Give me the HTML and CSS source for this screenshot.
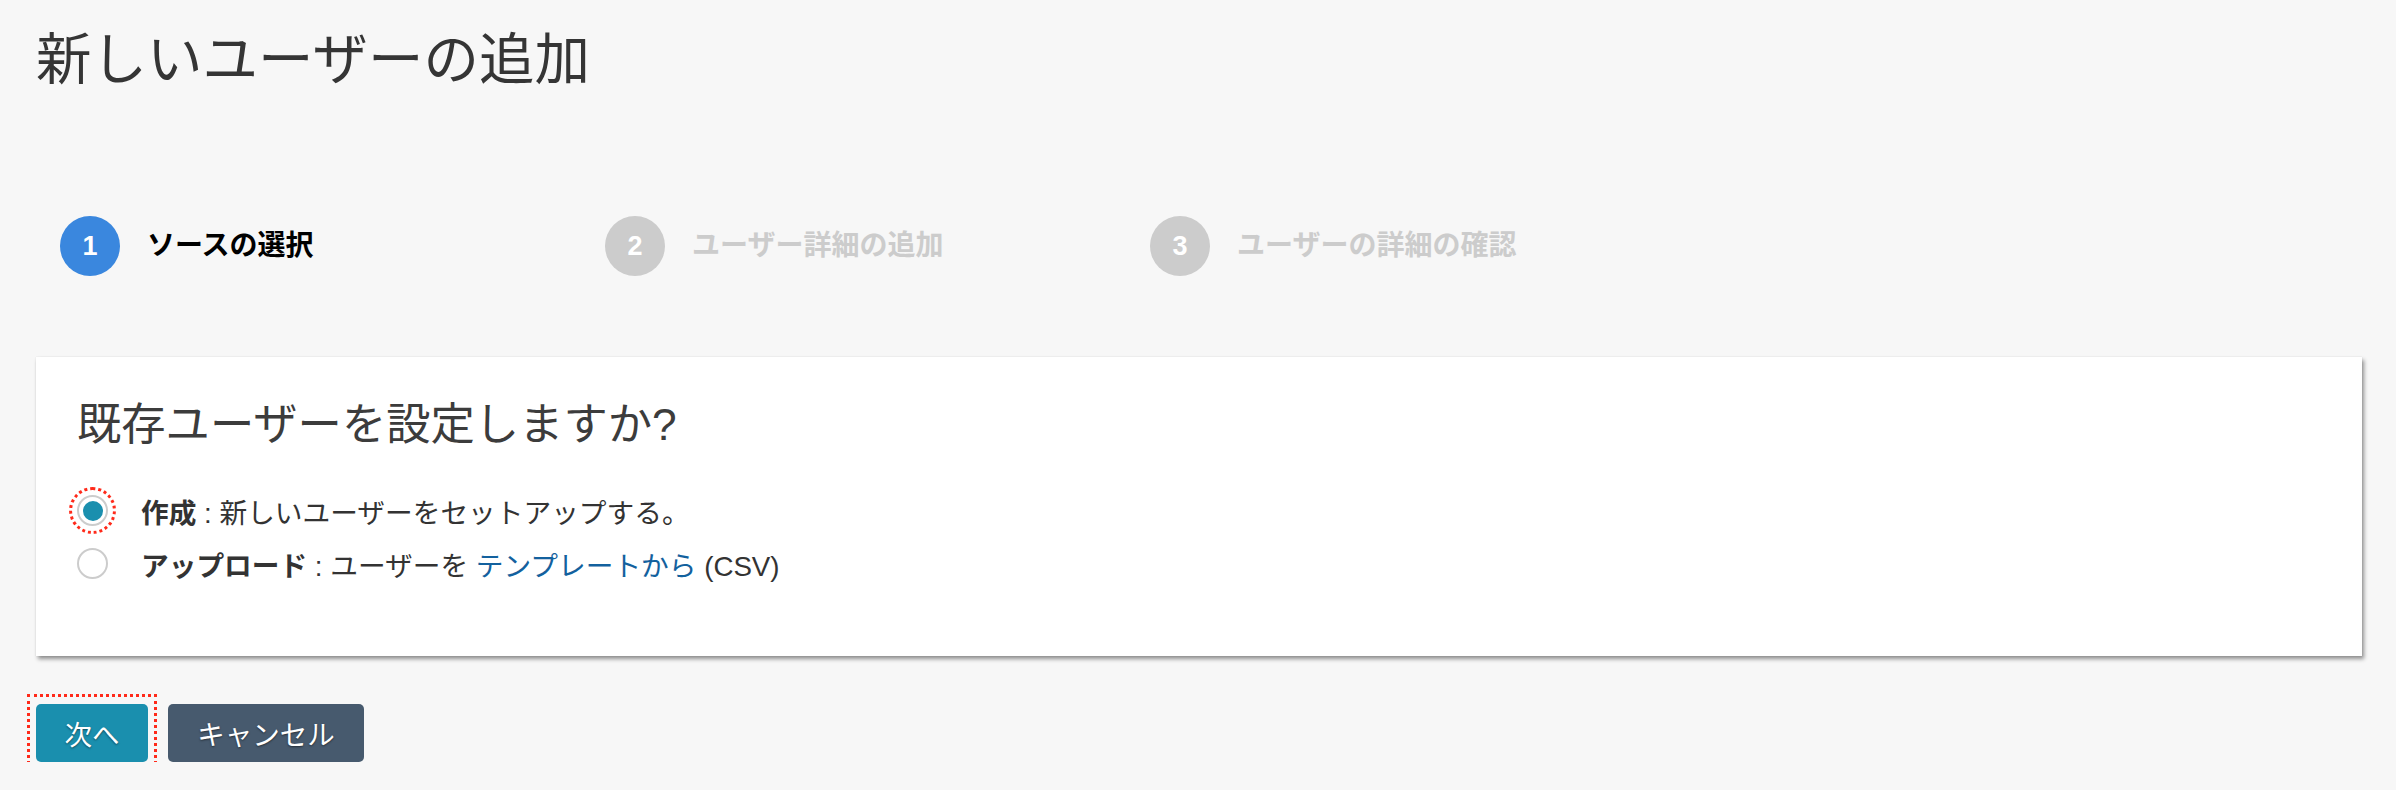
FILE: index.html
```html
<!DOCTYPE html>
<html lang="ja">
<head>
<meta charset="utf-8">
<title>新しいユーザーの追加</title>
<link rel="stylesheet" href="styles.css">
</head>
<body>
<main class="page">
  <h1 class="page-title">新しいユーザーの追加</h1>

  <ol class="steps">
    <li class="step step--active"><span class="step-num">1</span><span class="step-label">ソースの選択</span></li>
    <li class="step"><span class="step-num">2</span><span class="step-label">ユーザー詳細の追加</span></li>
    <li class="step"><span class="step-num">3</span><span class="step-label">ユーザーの詳細の確認</span></li>
  </ol>

  <section class="card">
    <h2 class="card-title">既存ユーザーを設定しますか?</h2>
    <div class="options">
      <label class="option">
        <span class="radio radio--checked radio--marked"></span>
        <span class="option-text"><b>作成</b> : 新しいユーザーをセットアップする。</span>
      </label>
      <label class="option">
        <span class="radio"></span>
        <span class="option-text"><b>アップロード</b> : ユーザーを <a class="link" href="#">テンプレートから</a> (CSV)</span>
      </label>
    </div>
  </section>

  <div class="actions">
    <button class="btn btn--primary btn--marked" type="button">次へ</button>
    <button class="btn btn--secondary" type="button">キャンセル</button>
  </div>
</main>
</body>
</html>
```

FILE: styles.css
```css
* {
  box-sizing: border-box;
}

html, body {
  margin: 0;
  padding: 0;
  background: #f7f7f7;
}

body {
  font-family: "Liberation Sans", "Noto Sans CJK JP", sans-serif;
  color: #333333;
}

.page {
  padding: 0 34px 0 36px;
}

.page-title {
  margin: 27px 0 0;
  font-size: 55.5px;
  line-height: 66px;
  font-weight: 400;
  color: #353535;
}

.steps {
  list-style: none;
  margin: 123px 0 0;
  padding: 0 0 0 24px;
  display: flex;
}

.step {
  width: 545px;
  display: flex;
  align-items: center;
  gap: 27px;
  height: 60px;
}

.step-num {
  width: 60px;
  height: 60px;
  border-radius: 50%;
  background: #cccccc;
  color: #ffffff;
  font-weight: 700;
  font-size: 27px;
  display: flex;
  align-items: center;
  justify-content: center;
  flex: none;
}

.step-label {
  font-size: 28px;
  font-weight: 700;
  color: #cccccc;
  line-height: 40px;
}

.step--active .step-num {
  background: #3a87de;
}

.step--active .step-label {
  color: #000000;
}

.card {
  margin-top: 81px;
  background: #ffffff;
  height: 299px;
  padding: 40px 41px 0;
  box-shadow: 2px 3px 4px rgba(0, 0, 0, 0.42), 0 0 1px rgba(0, 0, 0, 0.12);
}

.card-title {
  margin: 0;
  font-size: 44.3px;
  line-height: 56px;
  font-weight: 400;
  color: #3c3c3c;
}

.options {
  margin-top: 31px;
  display: flex;
  flex-direction: column;
}

.option {
  display: flex;
  align-items: center;
  height: 53px;
  gap: 33px;
  font-size: 27.7px;
  color: #333333;
}

.option-text b {
  font-weight: 700;
  color: #333333;
}

.radio {
  width: 31px;
  height: 31px;
  border-radius: 50%;
  border: 2px solid #cccccc;
  background: #ffffff;
  display: flex;
  align-items: center;
  justify-content: center;
  flex: none;
}

.radio--checked::before {
  content: "";
  width: 20px;
  height: 20px;
  border-radius: 50%;
  background: #1a8fae;
}

.radio--marked {
  outline: 3px dotted #ff2a1a;
  outline-offset: 5px;
}

.link {
  color: #13619e;
  text-decoration: none;
}

.actions {
  margin-top: 48px;
  display: flex;
  gap: 20px;
}

.btn {
  position: relative;
  height: 58px;
  border: none;
  border-radius: 5px;
  padding: 0;
  font-family: "Liberation Sans", "Noto Sans CJK JP", sans-serif;
  font-size: 27.5px;
  color: #ffffff;
  text-shadow: 0 1px 2px rgba(0, 0, 0, 0.5);
  cursor: pointer;
}

.btn--primary {
  background: #1a8fae;
  width: 112px;
}

.btn--secondary {
  background: #475a6e;
  width: 196px;
}

.btn--marked::after {
  content: "";
  position: absolute;
  top: -10px;
  left: -9px;
  right: -9px;
  bottom: -9px;
  border: 3px dotted #ff2a1a;
  pointer-events: none;
}
```
